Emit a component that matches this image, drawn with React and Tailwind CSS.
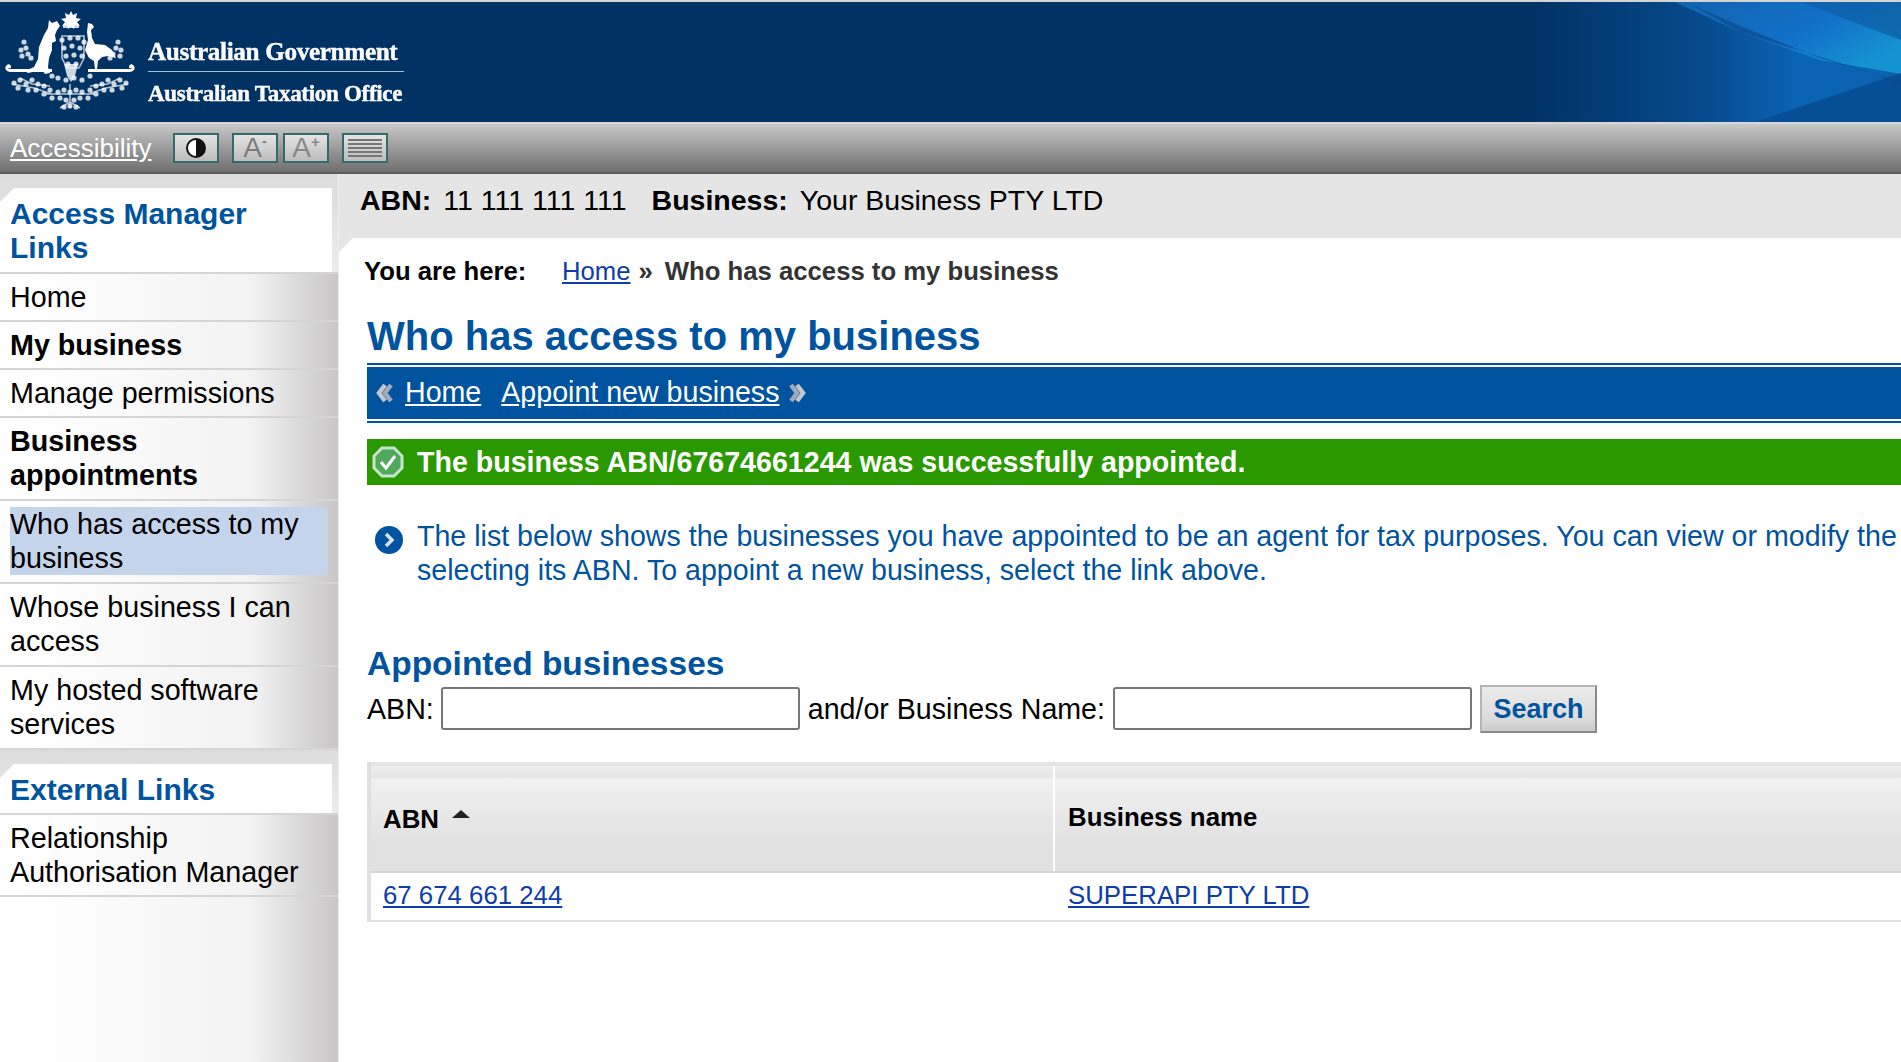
import React from "react";

const font = "[font-family:'Liberation_Sans',Arial,sans-serif]";

// small blossoms of the wattle spray round the crest
const blossoms = [
  [14, 83], [20, 80], [26, 84], [32, 80], [38, 84], [18, 88], [28, 90], [36, 90], [44, 86], [44, 94], [50, 90], [52, 98],
  [126, 83], [120, 80], [114, 84], [108, 80], [102, 84], [122, 88], [112, 90], [104, 90], [96, 86], [96, 94], [90, 90], [88, 98],
  [58, 92], [64, 90], [70, 92], [76, 90], [82, 92], [60, 98], [66, 100], [74, 100], [80, 98], [70, 106], [64, 107], [76, 107],
  [24, 42], [26, 48], [21, 50], [28, 54], [22, 56], [31, 58], [118, 42], [116, 48], [121, 50], [113, 54], [120, 56], [110, 58],
  [62, 40], [70, 38], [78, 38], [84, 42], [64, 48], [72, 46], [80, 48], [66, 56], [74, 55], [82, 56], [68, 64], [76, 64],
  [58, 78], [66, 80], [74, 78], [82, 80], [52, 76], [90, 76],
];

function Crest() {
  return (
    <svg viewBox="0 0 140 120" className="w-[140px] h-[120px] -mt-[2px] blur-[0.7px]" fill="#fff">
      {/* star */}
      <path d="M71 11l2 4 4-2-1 5 5 1-4 3 3 4-5-1-1 4-3-3-3 3-1-4-5 1 3-4-4-3 5-1-1-5 4 2z" />
      <rect x="63" y="25" width="16" height="3" opacity="0.8" />
      {/* kangaroo */}
      <path d="M49 20l3 3 5-2 3 5-3 4-2 5 1 6-4 2 0 7-3 8-1 9 2 6-5 1-3-4-14 3-3-2 9-4 4-8 1-12 5-12 4-7z" />
      {/* emu */}
      <path d="M88 23l4 1 2 3-3 3 1 8 3 6 10 1 7 5 4 8-8-2-6 1-4 4-1 8-2 0-1-8-5-3-4-8 3-10-1-8z" />
      {/* scroll */}
      <path d="M8 69h44v3H12c-5 0-8-3-6-6 2-3 5-2 5 1 0 1-1 2-2 1zM132 69H88v3h40c5 0 8-3 6-6-2-3-5-2-5 1 0 1 1 2 2 1z" />
      <path d="M64 64h14l-3 12-4 6-4-6z" opacity="0.8" />
      {/* spray and shield texture */}
      <g opacity="0.8">
        {blossoms.map(([x, y], i) => (
          <circle key={i} cx={x} cy={y} r="2.6" />
        ))}
      </g>
      <g stroke="#fff" strokeWidth="1.6" fill="none" opacity="0.7">
        <path d="M12 84l22 4 18 6M20 78l12 6 18 2M128 84l-22 4-18 6M120 78l-12 6-18 2M46 94h48M70 84v24M60 108l10-6 10 6" />
        <path d="M62 36h22v22l-5 10H67l-5-10z" />
      </g>
    </svg>
  );
}

function Banner() {
  return (
    <div className="relative h-[120px] overflow-hidden bg-[#003264]">
      {/* streak art on the right */}
      <svg className="absolute right-0 top-0 w-[501px] h-[120px]" viewBox="0 0 501 120" preserveAspectRatio="none">
        <defs>
          <linearGradient id="base" x1="0" y1="0" x2="1" y2="0">
            <stop offset="0.26" stopColor="#003264" />
            <stop offset="0.6" stopColor="#074a8c" />
            <stop offset="0.8" stopColor="#0a64b4" />
            <stop offset="1" stopColor="#0a62ae" />
          </linearGradient>
          <linearGradient id="top" x1="0" y1="0" x2="1" y2="0.6">
            <stop offset="0" stopColor="#1264ae" />
            <stop offset="0.6" stopColor="#1270c8" />
            <stop offset="1" stopColor="#1592d0" />
          </linearGradient>
          <linearGradient id="topfade" x1="0" y1="0" x2="1" y2="0">
            <stop offset="0" stopColor="#0e5ea8" />
            <stop offset="1" stopColor="#0a5596" />
          </linearGradient>
        </defs>
        <rect width="501" height="120" fill="url(#base)" />
        <polygon points="275,0 501,0 501,72 420,58 340,30" fill="url(#top)" />
        <polygon points="400,0 501,0 501,38" fill="url(#topfade)" opacity="0.6" />
        <polygon points="355,120 501,71 501,120" fill="#074f94" />
        <polygon points="290,2 340,30 475,72 501,84 501,80 420,56 345,26" fill="#0a4a88" opacity="0.7" />
      </svg>
      <div className="relative flex items-start">
        <Crest />
        <div className="ml-[8px] mt-[36px] w-[256px] text-white font-bold [font-family:'Liberation_Serif',serif] blur-[0.4px]">
          <div className="text-[25.2px] leading-[28px] tracking-[-0.35px] whitespace-nowrap [-webkit-text-stroke:0.4px_#fff]">Australian Government</div>
          <div className="h-[1px] bg-[#a9bdd2] mt-[5px] mb-[9px]"></div>
          <div className="text-[23px] leading-[26px] tracking-[-0.3px] whitespace-nowrap [-webkit-text-stroke:0.4px_#fff]">Australian Taxation Office</div>
        </div>
      </div>
    </div>
  );
}

function ToolButton({ children, className = "" }) {
  return (
    <button className={`w-[46px] h-[30px] border-2 border-[#336b6b] bg-gradient-to-b from-[#e4e4e4] to-[#bdbdbd] flex items-center justify-center ${className}`}>
      {children}
    </button>
  );
}

function Toolbar() {
  return (
    <div className="h-[52px] border-t-2 border-[#d8d8d8] border-b-[2px] border-b-[#5a5a5a] bg-gradient-to-b from-[#c9c9c9] to-[#6f6f6f] flex items-center">
      <a href="#" className="ml-[10px] w-[163px] text-[26px] leading-[32px] text-white underline">Accessibility</a>
      <ToolButton>
        <span className="w-[20px] h-[20px] rounded-full border-2 border-[#111] bg-gradient-to-r from-white from-50% to-[#111] to-50%"></span>
      </ToolButton>
      <ToolButton className="ml-[13px]">
        <span className="text-[28px] leading-[26px] text-[#7c7c7c]">A</span>
        <span className="text-[14px] leading-[14px] text-[#7c7c7c] font-bold -mt-[14px]">-</span>
      </ToolButton>
      <ToolButton className="ml-[5px]">
        <span className="text-[28px] leading-[26px] text-[#888]">A</span>
        <span className="text-[15px] leading-[14px] text-[#888] font-bold -mt-[12px]">+</span>
      </ToolButton>
      <ToolButton className="ml-[13px]">
        <span className="w-[34px] flex flex-col gap-[2px]">
          <span className="h-[2px] bg-[#777]"></span>
          <span className="h-[2px] bg-[#777]"></span>
          <span className="h-[2px] bg-[#777]"></span>
          <span className="h-[2px] bg-[#777]"></span>
          <span className="h-[2px] bg-[#777]"></span>
        </span>
      </ToolButton>
    </div>
  );
}

function SideHeading({ children, pad, top }) {
  return (
    <div className={`bg-gradient-to-b from-[#dcdcdc] to-[#ececec] pr-[6px] border-b-2 border-[#d5d5d5] ${top}`}>
      <h3 className={`bg-white [clip-path:polygon(14px_0,100%_0,100%_100%,0_100%,0_14px)] pl-[10px] text-[30px] leading-[34px] font-bold text-[#00539f] ${pad}`}>
        {children}
      </h3>
    </div>
  );
}

function SideItem({ children, bold, active, tall }) {
  return (
    <div className={`pt-[6px] pl-[10px] pr-[10px] border-b-2 border-[#d5d5d5] text-[28.7px] leading-[34px] text-black ${tall ? "pb-[7px]" : "pb-[6px]"}`}>
      <div className={`${bold ? "font-bold" : ""} ${active ? "bg-[#c3d4eb]" : ""}`}>{children}</div>
    </div>
  );
}

function Sidebar() {
  return (
    <aside className="w-[338px] shrink-0 h-full bg-gradient-to-r from-white from-10% via-[#f2f2f2] via-75% to-[#c8c6c6]">
      <SideHeading top="pt-[14px]" pad="pt-[9px] pb-[7px]">Access Manager<br />Links</SideHeading>
      <SideItem>Home</SideItem>
      <SideItem bold>My business</SideItem>
      <SideItem>Manage permissions</SideItem>
      <SideItem bold tall>Business<br />appointments</SideItem>
      <SideItem active tall>Who has access to my<br />business</SideItem>
      <SideItem tall>Whose business I can<br />access</SideItem>
      <SideItem tall>My hosted software<br />services</SideItem>
      <SideHeading top="pt-[14px]" pad="pt-[9px] pb-[6px]">External Links</SideHeading>
      <SideItem>Relationship<br />Authorisation Manager</SideItem>
    </aside>
  );
}

function CheckBadge() {
  return (
    <svg width="32" height="32" viewBox="0 0 32 32" className="shrink-0">
      <path d="M10 2h12l8 8v12l-8 8H10l-8-8V10z" fill="#4fa85c" stroke="#c9e4cc" strokeWidth="3" />
      <path d="M9 16l5 6 9-12" fill="none" stroke="#fff" strokeWidth="3" />
    </svg>
  );
}

function InfoBadge() {
  return (
    <svg width="30" height="30" viewBox="0 0 30 30" className="shrink-0">
      <circle cx="15" cy="15" r="14" fill="#00539f" />
      <path d="M12 9l6 6-6 6" fill="none" stroke="#d8e4f2" strokeWidth="3.5" />
    </svg>
  );
}

function DoubleChevron({ flip }) {
  return (
    <svg width="17" height="20" viewBox="0 0 17 20" className={flip ? "rotate-180" : ""}>
      <path d="M9 2L3 10l6 8" fill="none" stroke="#c4c8ce" strokeWidth="4.5" />
      <path d="M15 2L9 10l6 8" fill="none" stroke="#a2aab6" strokeWidth="4.5" />
    </svg>
  );
}

function Table() {
  return (
    <div className="mt-[29px] border-l-[4px] border-b-2 border-[#e0e0e0] text-[25.8px] leading-[32px]">
      <div className="h-[4px] bg-[#e4e4e4]"></div>
      <div className="h-[107px] border-b-2 border-[#d5d5d5] flex bg-[linear-gradient(#efefef_0,#e4e4e4_11px,#f1f1f1_13px,#e1e1e1_75%)] font-bold text-black">
        <div className="w-[684px] shrink-0 border-r-2 border-white pl-[12px] pt-[37px] flex items-start">
          <span>ABN</span>
          <span className="ml-[13px] mt-[7px] w-0 h-0 border-l-[9px] border-r-[9px] border-b-[8px] border-l-transparent border-r-transparent border-b-[#222]"></span>
        </div>
        <div className="pl-[13px] pt-[35px]">Business name</div>
      </div>
      <div className="h-[47px] pb-[3px] flex items-center text-[#0d3da8] bg-white">
        <a href="#" className="w-[684px] shrink-0 pl-[12px] underline">
          67 674 661 244
        </a>
        <a href="#" className="pl-[13px] underline">SUPERAPI PTY LTD</a>
      </div>
    </div>
  );
}

function Main() {
  return (
    <main className="flex-1 min-w-0 bg-[#e5e5e5] border-l border-[#efefef]">
      <div className="h-[64px] pl-[21px] pt-[9px] text-[28.5px] leading-[34px] text-black whitespace-nowrap">
        <b>ABN:</b>
        <span className="ml-[12px]">11 111 111 111</span>
        <b className="ml-[25px]">Business:</b>
        <span className="ml-[12px]">Your Business PTY LTD</span>
      </div>
      <div className="bg-white h-full [clip-path:polygon(14px_0,100%_0,100%_100%,0_100%,0_14px)] pl-[25px] pt-[17px]">
        <div className="text-[25.7px] leading-[32px] font-bold whitespace-nowrap flex">
          <span className="text-black w-[198px]">You are here:</span>
          <a href="#" className="font-normal text-[#0d3da8] underline">Home</a>
          <span className="ml-[8px] text-[#333]">»</span>
          <span className="ml-[12px] text-[#333]">Who has access to my business</span>
        </div>
        <div className="pl-[3px]">
          <h1 className="mt-[24px] text-[40px] leading-[50px] font-bold text-[#00539f] whitespace-nowrap">Who has access to my business</h1>
          <div className="mt-[2px] border-t-2 border-b-2 border-[#00539f] pt-[2px] pb-[2px]">
            <div className="h-[52px] bg-[#00539f] flex items-center pl-[9px] text-[28.6px] text-white">
              <DoubleChevron />
              <a href="#" className="ml-[12px] -mt-[1px] underline">Home</a>
              <a href="#" className="ml-[20px] -mt-[1px] underline">Appoint new business</a>
              <span className="ml-[10px] flex"><DoubleChevron flip /></span>
            </div>
          </div>
          <div className="mt-[16px] h-[46px] bg-[#2a9900] flex items-center pl-[5px] text-[28.6px] font-bold text-white whitespace-nowrap">
            <CheckBadge />
            <span className="ml-[13px]">The business ABN/67674661244 was successfully appointed.</span>
          </div>
          <div className="mt-[34px] flex whitespace-nowrap">
            <span className="mt-[6px] ml-[7px]"><InfoBadge /></span>
            <p className="ml-[13px] text-[28.6px] leading-[34px] text-[#00539f]">
              The list below shows the businesses you have appointed to be an agent for tax purposes. You can view or modify the<br />
              selecting its ABN. To appoint a new business, select the link above.
            </p>
          </div>
          <h2 className="mt-[57px] text-[33.5px] leading-[40px] font-bold text-[#00539f] whitespace-nowrap">Appointed businesses</h2>
          <form className="flex items-start h-[48px] mt-[1px] text-[28.6px] leading-[48px] text-black whitespace-nowrap">
            <label>ABN:</label>
            <input className="ml-[7px] mt-[2px] w-[359px] h-[43px] bg-white border-2 border-[#767676] rounded-[3px]" />
            <label className="ml-[8px]">and/or Business Name:</label>
            <input className="ml-[8px] mt-[2px] w-[359px] h-[43px] bg-white border-2 border-[#767676] rounded-[3px]" />
            <button type="button" className="ml-[8px] w-[117px] h-[48px] leading-[40px] border-2 border-t-[#b5b5b5] border-l-[#b5b5b5] border-r-[#8a8a8a] border-b-[#8a8a8a] bg-gradient-to-b from-[#ececec] via-[#dcdcdc] via-70% to-[#cccccc] text-[27px] font-bold text-[#00539f]">Search</button>
          </form>
          <Table />
        </div>
      </div>
    </main>
  );
}

export default function App() {
  return (
    <div className={`h-[1062px] w-full overflow-hidden flex flex-col bg-white ${font}`}>
      <div className="h-[2px] shrink-0 bg-[#d4d4d4]"></div>
      <div className="shrink-0">
        <Banner />
        <Toolbar />
      </div>
      <div className="flex-1 min-h-0 flex">
        <Sidebar />
        <Main />
      </div>
    </div>
  );
}
